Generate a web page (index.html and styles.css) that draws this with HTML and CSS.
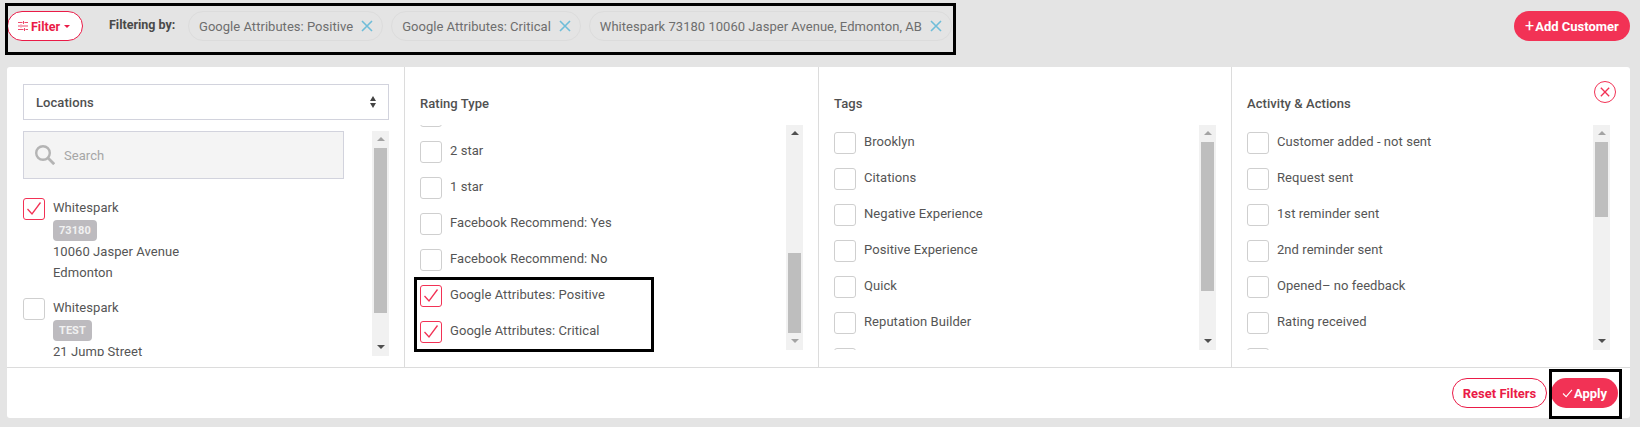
FILE: index.html
```html
<!DOCTYPE html>
<html lang="en">
<head>
<meta charset="utf-8">
<title>Filter customers</title>
<link rel="stylesheet" href="styles.css">
</head>
<body>
<svg class="defs" width="0" height="0" aria-hidden="true">
  <symbol id="tick" viewBox="0 0 22 22"><path d="M4.500 11l4.500 5L17.500 4.500" fill="none" stroke="currentColor" stroke-width="1.300"/></symbol>
  <symbol id="cross" viewBox="0 0 12 12"><path d="M1 1l10 10M11 1L1 11" fill="none" stroke="currentColor" stroke-width="1.600"/></symbol>
</svg>
<header class="topbar">
  <button class="btn btn-outline btn-filter">
    <svg class="sliders" viewBox="0 0 10 10" width="10" height="10"><path d="M0 1.500h4.500M6.500 1.500H10M0 5h2M4 5h6M0 8.500h5.500M7.500 8.500H10M5.500 0v3M3 3.500v3M6.500 7v3" fill="none" stroke="currentColor" stroke-width=".8"/></svg>
    Filter<span class="caret"></span>
  </button>
  <span class="filtering-label">Filtering by:</span>
  <div class="chips">
    <span class="chip">Google Attributes: Positive<svg class="chip-x"><use href="#cross"/></svg></span>
    <span class="chip">Google Attributes: Critical<svg class="chip-x"><use href="#cross"/></svg></span>
    <span class="chip">Whitespark 73180 10060 Jasper Avenue, Edmonton, AB<svg class="chip-x"><use href="#cross"/></svg></span>
  </div>
  <button class="btn btn-solid btn-add"><span class="plus">+</span>Add Customer</button>
</header>

<main class="card">
  <div class="columns">
    <section class="col col-loc">
      <div class="select">Locations
        <span class="updown"><i class="up"></i><i class="down"></i></span>
      </div>
      <div class="scroll scroll-loc">
        <div class="list">
          <div class="search">
            <svg class="search-icon" viewBox="0 0 20 20" width="20" height="20"><circle cx="8" cy="8" r="6.800" fill="none" stroke="currentColor" stroke-width="2.400"/><path d="M12.800 12.800l6.400 6.400" stroke="currentColor" stroke-width="2.800" fill="none"/></svg>
            Search
          </div>
          <div class="loc">
            <span class="box on"><svg><use href="#tick"/></svg></span>
            <div class="loc-text"><div class="loc-line">Whitespark</div><span class="badge">73180</span><div class="loc-line">10060 Jasper Avenue</div><div class="loc-line">Edmonton</div></div>
          </div>
          <div class="loc">
            <span class="box"></span>
            <div class="loc-text"><div class="loc-line">Whitespark</div><span class="badge">TEST</span><div class="loc-line">21 Jump Street</div></div>
          </div>
        </div>
        <div class="sb"><span class="arrow up off"></span><div class="track"><div class="thumb thumb-loc"></div></div><span class="arrow down"></span></div>
      </div>
    </section>

    <section class="col col-rating">
      <h2>Rating Type</h2>
      <div class="scroll">
        <div class="list">
          <div class="rows rows-scrolled">
            <label class="row"><span class="box"></span></label>
            <label class="row"><span class="box"></span>2 star</label>
            <label class="row"><span class="box"></span>1 star</label>
            <label class="row"><span class="box"></span>Facebook Recommend: Yes</label>
            <label class="row"><span class="box"></span>Facebook Recommend: No</label>
            <label class="row"><span class="box on"><svg><use href="#tick"/></svg></span>Google Attributes: Positive</label>
            <label class="row"><span class="box on"><svg><use href="#tick"/></svg></span>Google Attributes: Critical</label>
          </div>
        </div>
        <div class="sb"><span class="arrow up"></span><div class="track"><div class="thumb thumb-rating"></div></div><span class="arrow down off"></span></div>
      </div>
    </section>

    <section class="col col-tags">
      <h2>Tags</h2>
      <div class="scroll">
        <div class="list">
          <div class="rows">
            <label class="row"><span class="box"></span>Brooklyn</label>
            <label class="row"><span class="box"></span>Citations</label>
            <label class="row"><span class="box"></span>Negative Experience</label>
            <label class="row"><span class="box"></span>Positive Experience</label>
            <label class="row"><span class="box"></span>Quick</label>
            <label class="row"><span class="box"></span>Reputation Builder</label>
            <label class="row"><span class="box"></span></label>
          </div>
        </div>
        <div class="sb"><span class="arrow up off"></span><div class="track"><div class="thumb thumb-tags"></div></div><span class="arrow down"></span></div>
      </div>
    </section>

    <section class="col col-activity">
      <h2>Activity &amp; Actions</h2>
      <div class="scroll">
        <div class="list">
          <div class="rows">
            <label class="row"><span class="box"></span>Customer added - not sent</label>
            <label class="row"><span class="box"></span>Request sent</label>
            <label class="row"><span class="box"></span>1st reminder sent</label>
            <label class="row"><span class="box"></span>2nd reminder sent</label>
            <label class="row"><span class="box"></span>Opened– no feedback</label>
            <label class="row"><span class="box"></span>Rating received</label>
            <label class="row"><span class="box"></span></label>
          </div>
        </div>
        <div class="sb"><span class="arrow up off"></span><div class="track"><div class="thumb thumb-activity"></div></div><span class="arrow down"></span></div>
      </div>
    </section>
  </div>
  <footer class="footer">
    <button class="btn btn-outline btn-reset">Reset Filters</button>
    <button class="btn btn-solid btn-apply"><svg class="apply-tick" viewBox="0 0 12 10" width="11" height="9"><path d="M1 5l3.500 3.500L11 1" fill="none" stroke="currentColor" stroke-width="1.200"/></svg>Apply</button>
  </footer>
  <button class="close" aria-label="Close"><svg><use href="#cross"/></svg></button>
</main>

<div class="mark mark-top"></div>
<div class="mark mark-rating"></div>
<div class="mark mark-apply"></div>
</body>
</html>
```

FILE: styles.css
```css
* { box-sizing: border-box; }
html, body { margin: 0; padding: 0; }
body {
  width: 1640px;
  height: 427px;
  overflow: hidden;
  position: relative;
  background: #e4e4e4;
  font-family: Roboto, "Liberation Sans", sans-serif;
  font-size: 13px;
  letter-spacing: 0.06px;
  color: #555;
}
.defs { position: absolute; }

.topbar {
  height: 67px;
  padding: 11px 10px 0 7px;
  display: flex;
  align-items: flex-start;
}
.btn {
  height: 30px;
  border-radius: 15px;
  font-family: inherit;
  font-size: 13px;
  font-weight: 700;
  letter-spacing: 0;
  display: inline-flex;
  align-items: center;
  justify-content: center;
  padding: 0;
  cursor: pointer;
}
.btn-outline { background: #fff; color: #ea1b47; border: 1px solid #ea1b47; }
.btn-solid { background: #f23255; color: #fff; border: 0; }
.btn-filter { width: 76px; padding-right: 2px; font-size: 12.500px; }
.sliders { margin-right: 3px; }
.caret {
  width: 0; height: 0;
  margin-left: 4px;
  border: 3.500px solid transparent;
  border-top-color: currentColor;
  border-bottom-width: 0;
}
.filtering-label {
  margin-left: 26px;
  line-height: 28px;
  font-weight: 700;
  font-size: 12.500px;
  letter-spacing: 0;
  color: #4a4a4a;
  width: 79px;
  white-space: nowrap;
}
.chips { display: flex; gap: 8px; }
.chip {
  height: 30px;
  display: inline-flex;
  align-items: center;
  padding: 0 9px 0 10px;
  border: 1px solid #dcdcdc;
  border-radius: 15px;
  color: #6e6e6e;
  letter-spacing: 0.03px;
  white-space: nowrap;
}
.chip-x { width: 12px; height: 12px; margin-left: 8px; color: #6fbdd9; }
.btn-add { margin-left: auto; width: 116px; }
.plus { font-weight: 400; font-size: 16px; margin-right: 1px; line-height: 1; }

.card {
  position: relative;
  margin: 0 10px 0 7px;
  height: 351px;
  background: #fff;
  border-radius: 3px;
}
.columns {
  height: 300px;
  display: grid;
  grid-template-columns: 398px 414px 413px 398px;
}
.col { border-right: 1px solid #dcdcdc; }
.col:last-child { border-right: 0; }
.col-loc { padding: 17px 0 0 16px; }
.col-rating, .col-tags, .col-activity { padding: 27px 0 0 15px; }
.col h2 {
  margin: 0 0 11px;
  font-size: 13px;
  line-height: 20px;
  font-weight: 500;
  color: #505050;
}
.select {
  width: 366px;
  height: 36px;
  border: 1px solid #d2d3dd;
  padding-left: 12px;
  display: flex;
  align-items: center;
  justify-content: space-between;
  font-weight: 500;
  color: #505050;
}
.updown { display: flex; flex-direction: column; gap: 2px; margin-right: 12px; }
.updown i { width: 0; height: 0; border: 3.500px solid transparent; }
.updown .up { border-top: 0; border-bottom: 5.500px solid #444; }
.updown .down { border-bottom: 0; border-top: 5.500px solid #444; }

.scroll { height: 225px; display: flex; }
.scroll-loc { width: 366px; margin-top: 11px; }
.col-rating .scroll { width: 383px; }
.col-tags .scroll { width: 382px; }
.col-activity .scroll { width: 363px; }
.list { flex: 1; overflow: hidden; min-width: 0; }
.sb {
  width: 17px;
  flex: none;
  background: #f1f1f1;
  display: flex;
  flex-direction: column;
}
.track { flex: 1; padding: 0 2px; }
.thumb { background: #bebebe; }
.thumb-loc { height: 165px; }
.thumb-rating { height: 80px; margin-top: 111px; }
.thumb-tags { height: 149px; }
.thumb-activity { height: 75px; }
.arrow { height: 17px; flex: none; position: relative; }
.arrow::after {
  content: "";
  position: absolute;
  left: 4.500px;
  top: 6px;
  border: 4px solid transparent;
}
.arrow.up::after { border-top: 0; border-bottom: 4px solid #505050; }
.arrow.down::after { border-bottom: 0; border-top: 4px solid #505050; }
.arrow.up.off::after { border-bottom-color: #a3a3a3; }
.arrow.down.off::after { border-top-color: #a3a3a3; }

.search {
  width: 321px;
  height: 48px;
  background: #f4f4f4;
  border: 1px solid #d2d3dd;
  padding-left: 11px;
  display: flex;
  align-items: center;
  color: #a6a6a6;
}
.search-icon { color: #b4b4b4; margin-right: 9px; }
.loc { display: flex; gap: 8px; margin-top: 19px; height: 81px; }
.loc + .loc { height: auto; }
.loc-line { line-height: 21px; height: 21px; color: #555; }
.loc-line:first-child { height: 22px; line-height: 20px; }
.badge {
  display: block;
  width: max-content;
  height: 21px;
  line-height: 21px;
  padding: 0 6px;
  border-radius: 4px;
  background: #bdbbbf;
  color: #f1f1f1;
  font-size: 11px;
  font-weight: 700;
}
.box {
  width: 22px;
  height: 22px;
  flex: none;
  border: 1px solid #cfcfcf;
  border-radius: 3px;
  background: #fff;
  display: inline-block;
}
.box svg { display: block; width: 22px; height: 22px; margin: -1px; color: #f23255; }
.box.on { border-color: #f23255; }

.rows { padding-top: 7px; }
.rows-scrolled { margin-top: -20px; padding-top: 0; }
.row {
  height: 36px;
  line-height: 20px;
  display: flex;
  align-items: flex-start;
  gap: 8px;
  white-space: nowrap;
  color: #555;
}

.footer {
  height: 51px;
  border-top: 1px solid #dcdcdc;
  padding: 10px 12px 0 0;
  display: flex;
  justify-content: flex-end;
  align-items: flex-start;
  gap: 4px;
}
.btn-reset { width: 95px; }
.btn-apply { width: 67px; }
.apply-tick { margin-right: 1px; }
.close {
  position: absolute;
  top: 14px;
  right: 14px;
  width: 22px;
  height: 22px;
  padding: 5px;
  border: 1px solid #f23255;
  border-radius: 50%;
  background: #fff;
  color: #f23255;
}
.close svg { display: block; width: 10px; height: 10px; }

.mark { position: absolute; border: 3px solid #000; pointer-events: none; }
.mark-top { left: 5px; top: 3px; width: 951px; height: 52px; }
.mark-rating { left: 414px; top: 277px; width: 240px; height: 75px; }
.mark-apply { left: 1549px; top: 369px; width: 73px; height: 50px; }
```
